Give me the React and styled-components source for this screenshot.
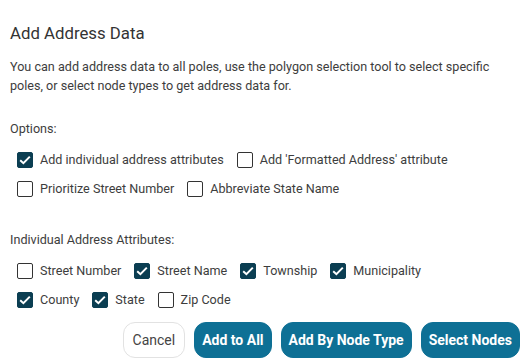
import React from "react";
import styled, { createGlobalStyle } from "styled-components";

const GlobalStyle = createGlobalStyle`
  html, body {
    margin: 0;
    padding: 0;
    background: #ffffff;
  }
  body {
    font-family: Roboto, "Liberation Sans", sans-serif;
    color: #3d3d3d;
  }
`;

const options = [
  [
    { label: "Add individual address attributes", checked: true },
    { label: "Add 'Formatted Address' attribute", checked: false },
  ],
  [
    { label: "Prioritize Street Number", checked: false },
    { label: "Abbreviate State Name", checked: false },
  ],
];

const attributes = [
  [
    { label: "Street Number", checked: false },
    { label: "Street Name", checked: true },
    { label: "Township", checked: true },
    { label: "Municipality", checked: true },
  ],
  [
    { label: "County", checked: true },
    { label: "State", checked: true },
    { label: "Zip Code", checked: false },
  ],
];

function Check({ checked, label }) {
  return (
    <Item>
      <Box $checked={checked}>
        {checked && (
          <svg width="12" height="10" viewBox="0 0 12 10">
            <path d="M1.2 5.2 L4.4 8.2 L10.8 1.6" fill="none" stroke="#fff" strokeWidth="2" />
          </svg>
        )}
      </Box>
      <span>{label}</span>
    </Item>
  );
}

function CheckGroup({ rows }) {
  return (
    <Group>
      {rows.map((row, i) => (
        <Row key={i}>
          {row.map((c) => (
            <Check key={c.label} {...c} />
          ))}
        </Row>
      ))}
    </Group>
  );
}

export default function App() {
  return (
    <>
      <GlobalStyle />
      <Dialog>
        <Title>Add Address Data</Title>
        <Text>
          You can add address data to all poles, use the polygon selection tool to select specific
          poles, or select node types to get address data for.
        </Text>
        <Label>Options:</Label>
        <CheckGroup rows={options} />
        <Label $top={33}>Individual Address Attributes:</Label>
        <CheckGroup rows={attributes} />
        <Footer>
          <Button $ghost>Cancel</Button>
          <Button>Add to All</Button>
          <Button>Add By Node Type</Button>
          <Button>Select Nodes</Button>
        </Footer>
      </Dialog>
    </>
  );
}

const Dialog = styled.div`
  width: 526px;
  height: 363px;
  box-sizing: border-box;
  padding: 23px 6px 0 10px;
  display: flex;
  flex-direction: column;
`;

const Title = styled.h2`
  margin: 0;
  font-size: 16.8px;
  font-weight: 400;
  line-height: 20px;
  color: #333;
`;

const Text = styled.p`
  margin: 14px 0 0;
  font-size: 12.6px;
  line-height: 19px;
  color: #3d3d3d;
`;

const Label = styled.div`
  margin-top: ${(p) => p.$top || 25}px;
  font-size: 12.6px;
  line-height: 18px;
  color: #3d3d3d;
`;

const Group = styled.div`
  margin-top: 13px;
  padding-left: 7px;
  display: flex;
  flex-direction: column;
  gap: 11px;
`;

const Row = styled.div`
  display: flex;
  gap: 13px;
`;

const Item = styled.label`
  display: flex;
  align-items: center;
  height: 18px;
  gap: 7px;
  font-size: 12.6px;
  line-height: 18px;
  color: #3d3d3d;
`;

const Box = styled.span`
  width: 16px;
  height: 16px;
  box-sizing: border-box;
  border-radius: 2px;
  border: 1px solid ${(p) => (p.$checked ? "#0b3e52" : "#333")};
  background: ${(p) => (p.$checked ? "#0b3e52" : "#fff")};
  display: flex;
  align-items: center;
  justify-content: center;
`;

const Footer = styled.div`
  margin-top: auto;
  margin-bottom: 5px;
  display: flex;
  justify-content: flex-end;
  gap: 9px;
`;

const Button = styled.button`
  height: 36px;
  padding: 0 ${(p) => (p.$ghost ? 9 : 7)}px;
  border-radius: 12px;
  border: 1px solid ${(p) => (p.$ghost ? "#e2e2e2" : "#0e7095")};
  background: ${(p) => (p.$ghost ? "#fff" : "#0e7095")};
  color: ${(p) => (p.$ghost ? "#444" : "#fff")};
  font-family: Roboto, "Liberation Sans", sans-serif;
  font-size: 14px;
  font-weight: ${(p) => (p.$ghost ? 400 : 700)};
`;
